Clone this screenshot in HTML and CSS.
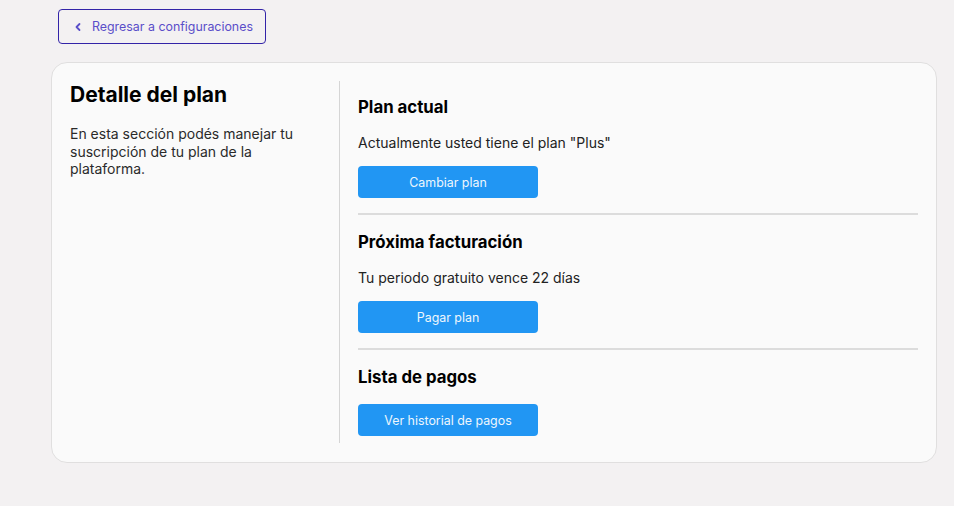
FILE: index.html
```html
<!DOCTYPE html>
<html lang="es">
<head>
  <meta charset="UTF-8" />
  <title>Detalle del plan</title>
  <link rel="stylesheet" href="styles.css">
</head>
<body>

  <!-- Volver -->
  <div class="top-bar">
    <button class="back-btn">
      <svg class="chevron" width="10" height="10" viewBox="0 0 10 10">
        <path d="M6.5 2 L3.5 5 L6.5 8" fill="none" stroke="currentColor" stroke-width="1.8" stroke-linecap="round" stroke-linejoin="round" />
      </svg>
      Regresar a configuraciones
    </button>
  </div>

  <!-- Tarjeta principal -->
  <div class="card">
    <div class="card-left">
      <h2>Detalle del plan</h2>
      <p>En esta sección podés manejar tu suscripción de tu plan de la plataforma.</p>
    </div>

    <div class="card-right">
      <div class="section">
        <h3>Plan actual</h3>
        <p>Actualmente usted tiene el plan "Plus"</p>
        <button class="btn-primary">Cambiar plan</button>
      </div>

      <div class="section">
        <h3>Próxima facturación</h3>
        <p>Tu periodo gratuito vence 22 días</p>
        <button class="btn-primary">Pagar plan</button>
      </div>

      <div class="section">
        <h3>Lista de pagos</h3>
        <button class="btn-primary">Ver historial de pagos</button>
      </div>
    </div>
  </div>

</body>
</html>
```

FILE: styles.css
```css
body {
  margin: 0;
  padding: 9px 18px 0 51px;
  font-family: Inter, 'Noto Sans', sans-serif;
  background: #f3f1f2;
  color: #111;
}

.top-bar {
  padding-left: 7px;
  margin-bottom: 18px;
}

.back-btn {
  display: flex;
  align-items: center;
  gap: 9px;
  width: 208px;
  height: 35px;
  padding: 0 0 0 14px;
  background: transparent;
  border: 1px solid #3324a8;
  border-radius: 4px;
  color: #5a4ec9;
  font-family: inherit;
  font-size: 12.4px;
  cursor: pointer;
}

.chevron {
  flex: none;
}

.card {
  display: flex;
  background: #fafafa;
  border: 1px solid #e0dfdf;
  border-radius: 16px;
  padding: 18px 18px 19px 18px;
  box-sizing: border-box;
  width: 886px;
}

.card-left {
  width: 250px;
  padding-right: 19px;
  border-right: 1px solid #d5d5d5;
}

.card-left h2 {
  margin: 0 0 16px;
  font-size: 21px;
  line-height: 28px;
  font-weight: 700;
  color: #000;
}

.card-left p {
  margin: 0;
  font-size: 14px;
  line-height: 17.5px;
  color: #2a2a2a;
}

.card-right {
  flex: 1;
  padding-left: 18px;
}

.section {
  padding: 16px 0 15px;
  border-bottom: 2px solid #dcdcdc;
}

.section:first-child {
  padding-top: 15px;
}

.section:last-child {
  border-bottom: none;
  padding-bottom: 7px;
}

.section h3 {
  margin: 0 0 16px;
  font-size: 16.8px;
  line-height: 22px;
  font-weight: 700;
  color: #000;
}

.section p {
  margin: 0 0 14px;
  font-size: 14px;
  line-height: 18px;
  color: #222;
}

.btn-primary {
  display: block;
  width: 180px;
  height: 32px;
  background-color: #2196f3;
  color: #eef6fd;
  border: none;
  border-radius: 4px;
  font-family: inherit;
  font-size: 12.4px;
  cursor: pointer;
}
```
